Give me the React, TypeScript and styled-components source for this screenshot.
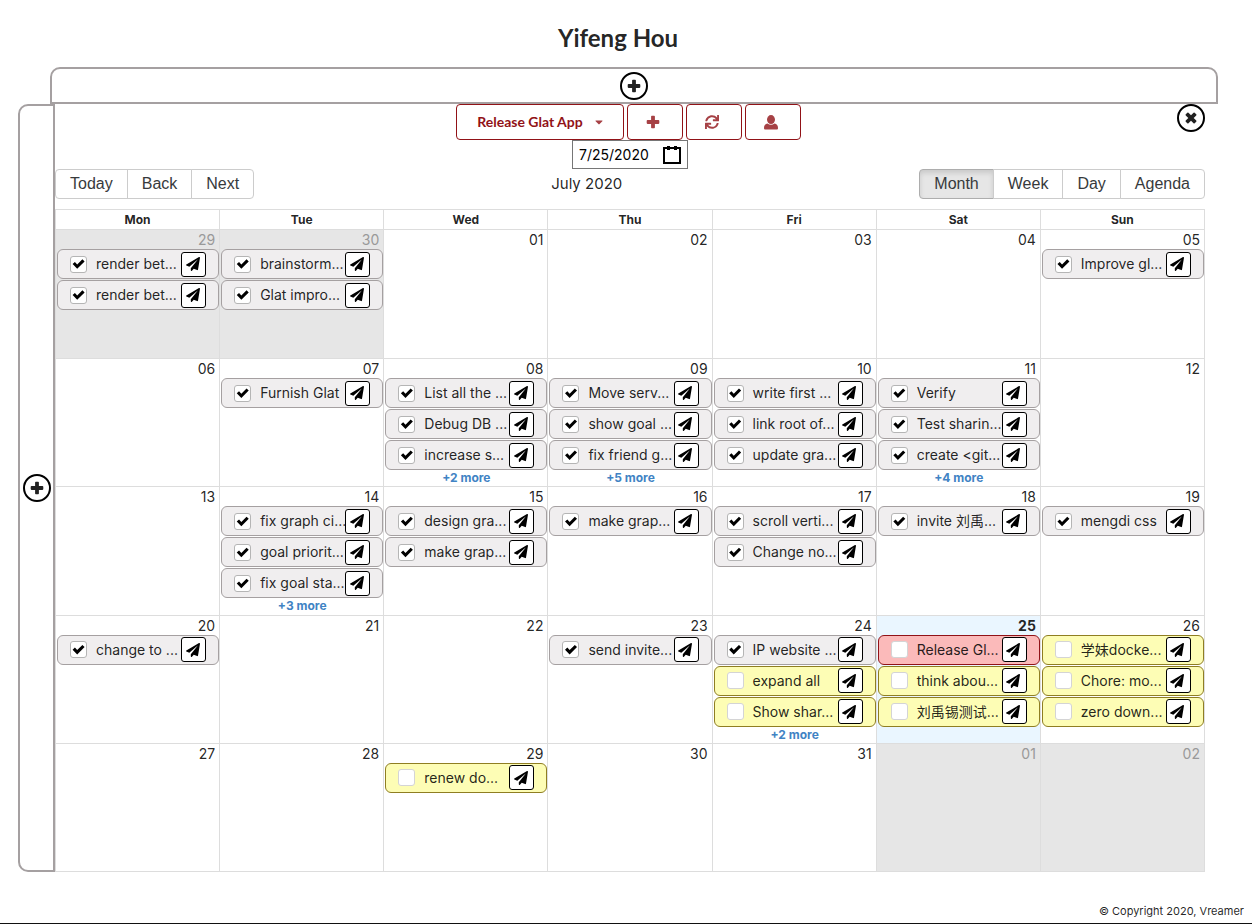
import React from "react";
import styled, { createGlobalStyle } from "styled-components";
import { FaPaperPlane, FaCaretDown, FaSync } from "react-icons/fa";

const ink = "rgba(0, 0, 0, 0.87)";
const frame = "#a5a0a1";
const line = "#dddddd";
const brand = "#911217";

const GlobalStyle = createGlobalStyle`
  * { box-sizing: border-box; }
  body {
    margin: 0;
    background: #fff;
    color: ${ink};
    font-family: Inter, "Noto Sans CJK SC", sans-serif;
    font-size: 14px;
    line-height: 20px;
  }
  button, input { font-family: inherit; font-size: inherit; color: inherit; margin: 0; }
`;

const Page = styled.div`
  display: flex;
  flex-direction: column;
  min-height: 100vh;
  border-bottom: 1px solid #111;
`;

const Shell = styled.main`
  flex: 1;
  display: flex;
  flex-direction: column;
  margin: 0 34px 0 18px;
`;

const Title = styled.h1`
  margin: 0;
  padding: 24px 0 15px;
  text-align: center;
  font: 700 24px/28px Lato, sans-serif;
`;

const TopPanel = styled.div`
  display: flex;
  align-items: center;
  justify-content: center;
  height: 37px;
  margin-left: 32px;
  border: 2px solid ${frame};
  border-radius: 10px 10px 0 0;
`;

const Body = styled.div`
  flex: 1;
  display: flex;
`;

const SidePanel = styled.div`
  display: flex;
  align-items: center;
  justify-content: center;
  width: 37px;
  flex: none;
  border: 2px solid ${frame};
  border-radius: 10px 0 0 10px;
`;

const RoundButton = styled.button`
  display: flex;
  align-items: center;
  justify-content: center;
  width: 28px;
  height: 28px;
  padding: 0;
  border: 2px solid #000;
  border-radius: 50%;
  background: #fff;
`;

const Content = styled.section`
  flex: 1;
  min-width: 0;
  display: flex;
  flex-direction: column;
  margin-right: 13px;
`;

const Actions = styled.div`
  display: grid;
  grid-template-columns: 1fr auto 1fr;
  align-items: start;
`;

const ActionGroup = styled.div`
  grid-column: 2;
  display: flex;
  gap: 3px;
  padding-right: 4px;
`;

const CloseSlot = styled.div`
  justify-self: end;
`;

const Action = styled.button<{ $wide?: boolean }>`
  display: flex;
  align-items: center;
  justify-content: center;
  gap: 10px;
  width: ${(p) => (p.$wide ? "168px" : "56px")};
  height: 36px;
  padding: ${(p) => (p.$wide ? "0 0 0 3px" : "0 3px 0 0")};
  border: 1px solid ${brand};
  border-radius: 4px;
  background: #fff;
  color: ${brand};
  font: 700 14px/20px Lato, sans-serif;
  svg { opacity: 0.8; }
`;

const DateField = styled.div`
  align-self: center;
  display: flex;
  align-items: center;
  justify-content: space-between;
  width: 116px;
  height: 29px;
  padding: 0 6px;
  border: 1px solid #767676;
  color: #000;
`;

const DateInput = styled.input`
  width: 78px;
  padding: 0;
  border: 0;
  outline: 0;
  background: none;
`;

const PlainButton = styled.button`
  display: flex;
  padding: 0;
  border: 0;
  background: none;
`;

const Toolbar = styled.div`
  display: flex;
  align-items: center;
  justify-content: space-between;
  margin-bottom: 10px;
`;

const Segments = styled.div`
  display: flex;
`;

const Segment = styled.button<{ $active?: boolean }>`
  height: 30px;
  padding: 0 14px;
  border: 1px solid ${(p) => (p.$active ? "#adadad" : "#ccc")};
  background: ${(p) => (p.$active ? "#e6e6e6" : "#fff")};
  box-shadow: ${(p) => (p.$active ? "inset 0 3px 5px rgba(0, 0, 0, 0.125)" : "none")};
  color: #373a3c;
  font: 16px/18px "Liberation Sans", sans-serif;
  & + & { margin-left: -1px; }
  &:first-child { border-radius: 4px 0 0 4px; }
  &:last-child { border-radius: 0 4px 4px 0; }
`;

const Label = styled.span`
  font-size: 15px;
`;

const Month = styled.table`
  flex: 1;
  display: flex;
  flex-direction: column;
  border: 1px solid ${line};
  border-left-width: 0;
`;

const Head = styled.thead`
  display: block;
`;

const Weeks = styled.tbody`
  flex: 1;
  display: grid;
  grid-auto-rows: minmax(128px, 1fr);
`;

const Row = styled.tr`
  display: grid;
  grid-template-columns: repeat(7, minmax(0, 1fr));
  tbody & + & { border-top: 1px solid ${line}; }
`;

const Weekday = styled.th`
  padding: 0;
  border-left: 1px solid ${line};
  border-bottom: 1px solid ${line};
  font-size: 12px;
  line-height: 19px;
`;

const Cell = styled.td<{ $tone?: Tone }>`
  padding: 0 0 0 1px;
  border-left: 1px solid ${line};
  background: ${(p) => (p.$tone === "off" ? "#e6e6e6" : p.$tone === "today" ? "#eaf6ff" : "#fff")};
`;

const DayNumber = styled.div<{ $tone?: Tone }>`
  height: 19px;
  padding-right: 4px;
  text-align: right;
  line-height: 20px;
  font-weight: ${(p) => (p.$tone === "today" ? 700 : 400)};
  color: ${(p) => (p.$tone === "off" ? "#999" : ink)};
`;

const Events = styled.div`
  display: grid;
  grid-template-columns: minmax(0, 1fr);
  gap: 1px;
`;

const palette = {
  done: ["#f0eeef", "#a5a0a1"],
  todo: ["#fdfdb5", "#8f7e22"],
  urgent: ["#fbbaba", "#911217"],
};

const EventBox = styled.div<{ $kind: Kind }>`
  display: flex;
  align-items: center;
  height: 30px;
  padding: 0 12px;
  border: 1px solid ${(p) => palette[p.$kind][1]};
  border-radius: 6px;
  background: ${(p) => palette[p.$kind][0]};
`;

const EventLabel = styled.label`
  flex: 1;
  min-width: 0;
  display: flex;
  align-items: center;
  gap: 9px;
  white-space: nowrap;
`;

const Tick = styled.input`
  appearance: none;
  flex: none;
  display: grid;
  place-items: center;
  width: 17px;
  height: 17px;
  border: 1px solid #d4d4d5;
  border-radius: 3px;
  background: #fff;
  &:checked { border-color: #b5b5b5; }
  &:checked::after {
    content: "";
    width: 13px;
    height: 11px;
    background: #000;
    clip-path: path("M0.6 5.6 L2.9 3.5 L5.2 6 L10.4 0.8 L12.6 2.9 L5.2 10.3 Z");
  }
`;

const Send = styled.button`
  flex: none;
  display: flex;
  align-items: center;
  justify-content: center;
  width: 25px;
  height: 25px;
  padding: 0 2px 0 0;
  border: 1px solid #000;
  border-radius: 3px;
  background: #fff;
  color: #000;
`;

const More = styled.a`
  display: block;
  text-align: center;
  text-decoration: none;
  font-size: 12px;
  font-weight: 700;
  line-height: 16px;
  color: #4183c4;
`;

const Footer = styled.footer`
  margin-top: 29px;
  padding: 0 8px 2px;
  text-align: right;
  font-size: 11px;
`;

type Kind = "done" | "todo" | "urgent";
type Tone = "off" | "today";
type Day = { n: string; tone?: Tone; events?: [string, Kind?][]; more?: number };

const weekdays = ["Mon", "Tue", "Wed", "Thu", "Fri", "Sat", "Sun"];

const weeks: Day[][] = [
  [
    { n: "29", tone: "off", events: [["render bet..."], ["render bet..."]] },
    { n: "30", tone: "off", events: [["brainstorm..."], ["Glat impro..."]] },
    { n: "01" },
    { n: "02" },
    { n: "03" },
    { n: "04" },
    { n: "05", events: [["Improve gl..."]] },
  ],
  [
    { n: "06" },
    { n: "07", events: [["Furnish Glat"]] },
    { n: "08", events: [["List all the ..."], ["Debug DB ..."], ["increase s..."]], more: 2 },
    { n: "09", events: [["Move serv..."], ["show goal ..."], ["fix friend g..."]], more: 5 },
    { n: "10", events: [["write first ..."], ["link root of..."], ["update gra..."]] },
    { n: "11", events: [["Verify"], ["Test sharin..."], ["create <git..."]], more: 4 },
    { n: "12" },
  ],
  [
    { n: "13" },
    { n: "14", events: [["fix graph ci..."], ["goal priorit..."], ["fix goal sta..."]], more: 3 },
    { n: "15", events: [["design gra..."], ["make grap..."]] },
    { n: "16", events: [["make grap..."]] },
    { n: "17", events: [["scroll verti..."], ["Change no..."]] },
    { n: "18", events: [["invite 刘禹..."]] },
    { n: "19", events: [["mengdi css"]] },
  ],
  [
    { n: "20", events: [["change to ..."]] },
    { n: "21" },
    { n: "22" },
    { n: "23", events: [["send invite..."]] },
    { n: "24", events: [["IP website ..."], ["expand all", "todo"], ["Show shar...", "todo"]], more: 2 },
    { n: "25", tone: "today", events: [["Release Gl...", "urgent"], ["think abou...", "todo"], ["刘禹锡测试...", "todo"]] },
    { n: "26", events: [["学妹docke...", "todo"], ["Chore: mo...", "todo"], ["zero down...", "todo"]] },
  ],
  [
    { n: "27" },
    { n: "28" },
    { n: "29", events: [["renew do...", "todo"]] },
    { n: "30" },
    { n: "31" },
    { n: "01", tone: "off" },
    { n: "02", tone: "off" },
  ],
];

const PlusIcon = ({ turned = false }: { turned?: boolean }) => (
  <svg width="14" height="14" viewBox="0 0 14 14" fill="currentColor" aria-hidden="true">
    <path
      transform={turned ? "rotate(45 7 7)" : undefined}
      d="M5.9 .7H8.100Q8.900 .7 8.900 1.500V5.100H12.500Q13.300 5.100 13.300 5.900V8.100Q13.300 8.900 12.500 8.900H8.900V12.500Q8.900 13.300 8.100 13.300H5.900Q5.100 13.300 5.100 12.500V8.900H1.500Q.7 8.900 .7 8.100V5.900Q.7 5.100 1.500 5.100H5.100V1.500Q5.100 .7 5.900 .7Z"
    />
  </svg>
);

const UserIcon = () => (
  <svg width="14" height="15" viewBox="0 0 14 15" fill="currentColor" aria-hidden="true">
    <ellipse cx="7" cy="4.6" rx="4" ry="4.500" />
    <path d="M0 13C0 10.300 1.200 9.300 3.500 8.600C5.600 10.200 8.400 10.200 10.500 8.600C12.800 9.300 14 10.300 14 13C14 14 13.500 14.500 12.500 14.500H1.500C.5 14.500 0 14 0 13Z" />
  </svg>
);

const CalendarIcon = () => (
  <svg width="18" height="18" viewBox="0 0 18 18" fill="none" stroke="#000" strokeWidth="2" aria-hidden="true">
    <path d="M1 2H17V17H1Z" />
    <path d="M5.500 0V4M12.500 0V4" strokeWidth="3" />
  </svg>
);

const CalendarEvent = ({ title, kind = "done" }: { title: string; kind?: Kind }) => (
  <EventBox $kind={kind}>
    <EventLabel>
      <Tick type="checkbox" defaultChecked={kind === "done"} />
      {title}
    </EventLabel>
    <Send aria-label={`Share ${title}`}>
      <FaPaperPlane size={14} />
    </Send>
  </EventBox>
);

export default function App() {
  return (
    <Page>
      <GlobalStyle />
      <Shell>
        <Title>Yifeng Hou</Title>
        <TopPanel>
          <RoundButton aria-label="Expand top panel"><PlusIcon /></RoundButton>
        </TopPanel>
        <Body>
          <SidePanel>
            <RoundButton aria-label="Expand side panel"><PlusIcon /></RoundButton>
          </SidePanel>
          <Content>
            <Actions>
              <ActionGroup>
                <Action $wide>Release Glat App <FaCaretDown size={12} /></Action>
                <Action aria-label="Add"><PlusIcon /></Action>
                <Action aria-label="Refresh"><FaSync /></Action>
                <Action aria-label="Account"><UserIcon /></Action>
              </ActionGroup>
              <CloseSlot>
                <RoundButton aria-label="Close"><PlusIcon turned /></RoundButton>
              </CloseSlot>
            </Actions>
            <DateField>
              <DateInput aria-label="Date" defaultValue="7/25/2020" />
              <PlainButton aria-label="Pick a date"><CalendarIcon /></PlainButton>
            </DateField>
            <Toolbar>
              <Segments>
                {["Today", "Back", "Next"].map((t) => <Segment key={t}>{t}</Segment>)}
              </Segments>
              <Label>July 2020</Label>
              <Segments>
                {["Month", "Week", "Day", "Agenda"].map((t) => (
                  <Segment key={t} $active={t === "Month"}>{t}</Segment>
                ))}
              </Segments>
            </Toolbar>
            <Month>
              <Head>
                <Row>{weekdays.map((d) => <Weekday key={d} scope="col">{d}</Weekday>)}</Row>
              </Head>
              <Weeks>
                {weeks.map((week, w) => (
                  <Row key={w}>
                    {week.map((day) => (
                      <Cell key={day.n} $tone={day.tone}>
                        <DayNumber $tone={day.tone}>{day.n}</DayNumber>
                        <Events>
                          {day.events?.map(([title, kind], i) => (
                            <CalendarEvent key={i} title={title} kind={kind} />
                          ))}
                        </Events>
                        {day.more && <More href="#">+{day.more} more</More>}
                      </Cell>
                    ))}
                  </Row>
                ))}
              </Weeks>
            </Month>
          </Content>
        </Body>
      </Shell>
      <Footer>© Copyright 2020, Vreamer</Footer>
    </Page>
  );
}
